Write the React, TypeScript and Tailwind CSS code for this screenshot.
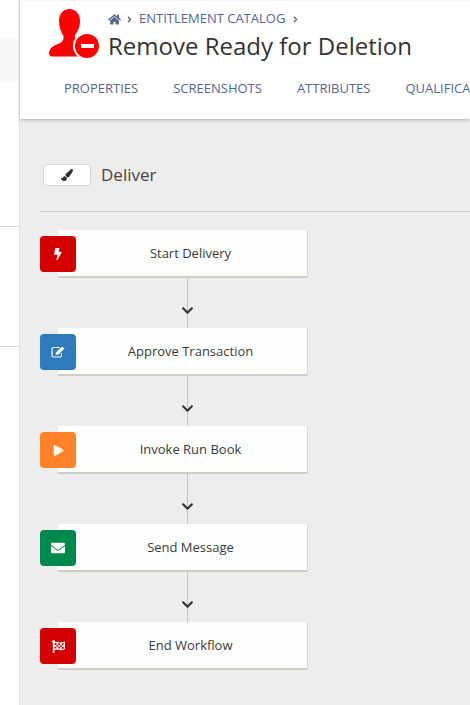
import { ReactNode } from 'react';
import { FaBolt, FaChevronDown, FaChevronRight, FaEnvelope, FaFlagCheckered, FaHome, FaPaintBrush, FaPlay } from 'react-icons/fa';

const tabs = ['PROPERTIES', 'SCREENSHOTS', 'ATTRIBUTES', 'QUALIFICATIONS'];

function EditIcon() {
  return (
    <svg width="14" height="12" viewBox="0 0 14 12">
      <path d="M8.5 1.5H2.5A1.5 1.5 0 0 0 1 3V9.5A1.5 1.5 0 0 0 2.5 11H9A1.5 1.5 0 0 0 10.5 9.5V7" fill="none" stroke="#ffffff" strokeWidth="1.2" />
      <path d="M11 0.5L13.5 2.5L7.5 8.5L4.5 9L5 6.5Z" fill="#ffffff" />
    </svg>
  );
}

const steps: { label: string; color: string; icon: ReactNode }[] = [
  { label: 'Start Delivery', color: 'bg-[#d40000]', icon: <FaBolt size={12} /> },
  { label: 'Approve Transaction', color: 'bg-[#2f79bd]', icon: <EditIcon /> },
  { label: 'Invoke Run Book', color: 'bg-[#ff8228]', icon: <FaPlay size={11} /> },
  { label: 'Send Message', color: 'bg-[#00894c]', icon: <FaEnvelope size={14} /> },
  { label: 'End Workflow', color: 'bg-[#d40000]', icon: <FaFlagCheckered size={13} /> },
];

function UserRemoveIcon() {
  return (
    <svg width="52" height="51" viewBox="48 9 52 51" className="shrink-0">
      <path
        d="M69.5 10C76 10 80 15 80 22C80 28 77.5 33 75 36C74.5 38 75 40 77 41L85 57.5L52 57.5C49 57.5 48.5 54 49.5 52C51 47 56 46 60 44C63 42.5 64 40 63.5 37C61 33 59 28 59 22C59 15 63 10 69.5 10Z"
        fill="#ff0000"
      />
      <circle cx="87" cy="47" r="14" fill="#ffffff" />
      <circle cx="87" cy="47" r="12" fill="#ff0000" />
      <rect x="81" y="45" width="13" height="4" fill="#ffffff" />
    </svg>
  );
}

function Step({ label, color, icon }: { label: string; color: string; icon: ReactNode }) {
  return (
    <div className="ml-[18px] flex h-[48px] w-[249px] items-center border-b-2 border-[#cfcfc8] bg-[#fdfffd] shadow-[1px_0_0_#d8d8d2]">
      <div className={`-ml-[18px] mt-[2px] flex h-[36px] w-[36px] shrink-0 items-center justify-center rounded text-white ${color}`}>
        {icon}
      </div>
      <span className="flex-1 pr-[2px] pt-[2px] text-center text-[13px] text-[#3a3a3a]">{label}</span>
    </div>
  );
}

function Connector() {
  return (
    <div className="relative ml-[147px] h-[50px] w-px bg-[#c4c4c0]">
      <FaChevronDown size={13} className="absolute left-[-6px] top-[26px] text-[#33302f]" />
    </div>
  );
}

export default function App() {
  return (
    <div className="flex h-[705px] w-[470px] overflow-hidden bg-white font-['Open_Sans',sans-serif]">
      <aside className="flex w-[19px] shrink-0 flex-col bg-white">
        <div className="mt-[39px] h-[42px] bg-[#f8f8f9]" />
        <div className="mt-[145px] h-px bg-[#d2d2cc]" />
        <div className="mt-[119px] h-px bg-[#d2d2cc]" />
      </aside>

      <main className="flex min-w-0 flex-1 flex-col border-l border-[#dedede] bg-[#ededee]">
        <header className="relative h-[119px] shrink-0 border-t border-[#f3f3f3] bg-white pl-[28px] shadow-[0_1px_3px_rgba(0,0,0,0.25)]">
          <div className="flex">
            <div className="mt-[7px] w-[60px]">
              <UserRemoveIcon />
            </div>
            <div className="flex flex-col">
              <div className="mt-[9px] flex h-[18px] items-center text-[13px] text-[#56658f]">
                <FaHome size={13} />
                <FaChevronRight size={7} className="ml-[5px] mr-[6px] text-[#555]" />
                <span>ENTITLEMENT CATALOG</span>
                <FaChevronRight size={7} className="ml-[7px] text-[#555]" />
              </div>
              <h1 className="mt-[1px] whitespace-nowrap text-[24px] leading-[33px] text-[#333]">Remove Ready for Deletion</h1>
            </div>
          </div>
          <nav className="mt-[17px] flex gap-[35px] whitespace-nowrap pl-[16px] text-[13px] leading-[18px] text-[#56658f]">
            {tabs.map((tab) => (
              <span key={tab}>{tab}</span>
            ))}
          </nav>
        </header>

        <section className="pl-[20px]">
          <div className="ml-[3px] mt-[45px] flex items-center">
            <div className="flex h-[22px] w-[48px] items-center justify-center rounded border border-[#d6d6d6] bg-white text-[#333]">
              <FaPaintBrush size={12} />
            </div>
            <span className="ml-[10px] text-[17px] leading-[22px] text-[#4a4343]">Deliver</span>
          </div>
          <div className="mt-[25px] h-px bg-[#cfcfc8]" />
          <div className="mt-[18px]">
            {steps.map((step, i) => (
              <div key={step.label}>
                <Step {...step} />
                {i < steps.length - 1 && <Connector />}
              </div>
            ))}
          </div>
        </section>
      </main>
    </div>
  );
}
